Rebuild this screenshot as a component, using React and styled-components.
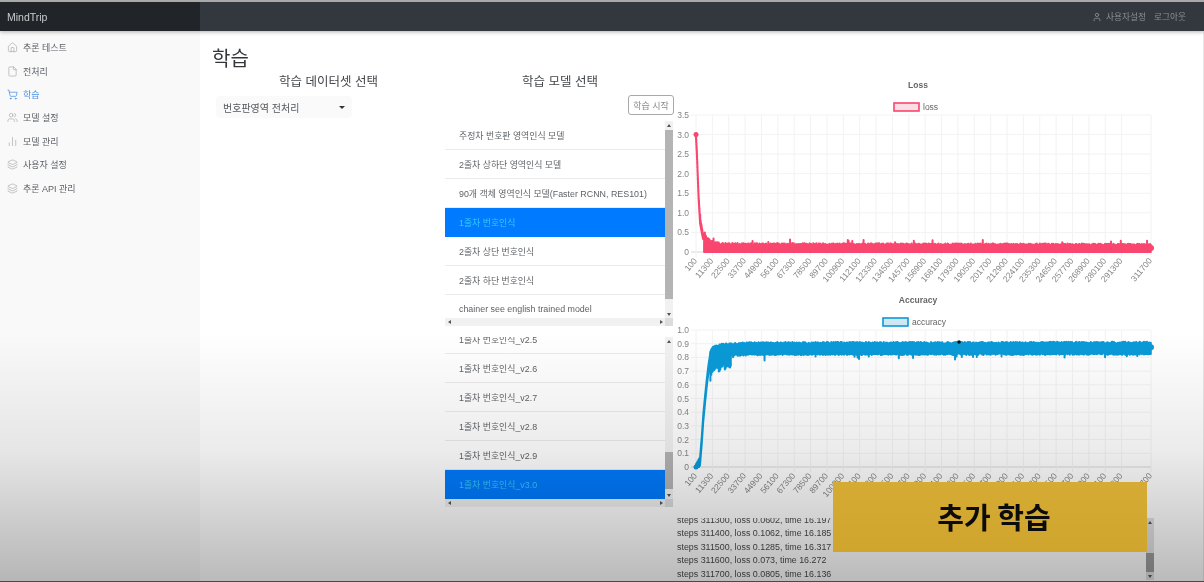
import React from 'react'
import styled, { createGlobalStyle } from 'styled-components'
import { House, File, ShoppingCart, Users, ChartNoAxesColumn, Layers, User } from 'lucide-react'

const GlobalStyle = createGlobalStyle`
  html, body {
    margin: 0;
    padding: 0;
    background: #fff;
    overflow: hidden;
  }
  * {
    box-sizing: border-box;
  }
`

const FONT = `"Liberation Sans", "Noto Sans CJK KR", sans-serif`

const Shell = styled.div`
  position: relative;
  width: 1204px;
  height: 582px;
  overflow: hidden;
  display: flex;
  flex-direction: column;
  font-family: ${FONT};
  background: #fff;
  border-top: 2px solid #a9a9a9;
  border-bottom: 1px solid #4a4a4a;
  filter: blur(0.5px);
`
const Vignette = styled.div`
  position: absolute;
  inset: 0;
  pointer-events: none;
  background: linear-gradient(
    to bottom,
    rgba(0, 0, 0, 0) 0,
    rgba(0, 0, 0, 0) 330px,
    rgba(0, 0, 0, 0.08) 450px,
    rgba(0, 0, 0, 0.27) 580px
  );
`
const TopBar = styled.header`
  flex: 0 0 29px;
  display: flex;
  align-items: center;
  background: #33383e;
  box-shadow: 0 1px 4px rgba(0, 0, 0, 0.3);
  z-index: 1;
`
const Brand = styled.div`
  width: 200px;
  height: 100%;
  display: flex;
  align-items: center;
  padding-left: 7px;
  background: #212428;
  color: #c9cbcd;
  font-size: 10.5px;
`
const TopLinks = styled.nav`
  margin-left: auto;
  display: flex;
  align-items: center;
  padding-right: 18px;
  color: #8b8f94;
  font-size: 8.7px;
`
const TopLink = styled.span`
  display: flex;
  align-items: center;
  gap: 4px;
  margin-left: 8px;
`
const Body = styled.div`
  flex: 1;
  display: flex;
  min-height: 0;
`
const Sidebar = styled.aside`
  flex: 0 0 200px;
  padding-top: 5px;
  background: #f9f9fa;
`
const NavItem = styled.div`
  height: 23.4px;
  display: flex;
  align-items: center;
  gap: 5px;
  padding-left: 7px;
  font-size: 9px;
  color: ${(props) => (props.$active ? '#4a90e2' : '#5d6165')};

  svg {
    color: ${(props) => (props.$active ? '#2f80e0' : '#a3a6a9')};
  }
`
const Main = styled.main`
  flex: 1;
  min-width: 0;
  padding-left: 12px;
  border-right: 1px solid #e8e8e8;
`
const PageTitle = styled.h1`
  margin: 0;
  height: 42px;
  padding-top: 15px;
  font-size: 20px;
  line-height: 27px;
  font-weight: 400;
  color: #33373b;
`
const Columns = styled.div`
  display: grid;
  grid-template-columns: 233px 230px 1fr;
`
const Column = styled.section`
  display: flex;
  flex-direction: column;
  min-width: 0;
`
const ColumnTitle = styled.h2`
  margin: 0;
  height: 18px;
  font-size: 12.5px;
  line-height: 18px;
  font-weight: 400;
  text-align: center;
  color: #43474b;
`
const SelectBox = styled.div`
  width: 136px;
  height: 22px;
  margin: 5px 0 0 4px;
  padding: 0 7px;
  display: flex;
  align-items: center;
  justify-content: space-between;
  border-radius: 4px;
  background: #fafafa;
  font-size: 10px;
  color: #55595d;
`
const Caret = styled.span`
  width: 0;
  height: 0;
  border-left: 3px solid transparent;
  border-right: 3px solid transparent;
  border-top: 3px solid #333;
`
const StartRow = styled.div`
  display: flex;
  justify-content: flex-end;
  padding: 4px 1px 6px 0;
`
const StartButton = styled.button`
  width: 46px;
  height: 20px;
  padding: 0;
  border: 1px solid #a8a8a8;
  border-radius: 3px;
  background: #fff;
  color: #85898d;
  font-family: ${FONT};
  font-size: 9px;
`

// drawn scrollbars: the screenshot's bars are part of the picture
const Pane = styled.div`
  display: grid;
  grid-template-columns: 1fr 8px;
  grid-template-rows: ${(props) => (props.$noBar ? '1fr' : '1fr 8px')};
  width: ${(props) => props.$width}px;
  height: ${(props) => props.$height}px;
  margin-top: ${(props) => props.$gap || 0}px;
  background: #fff;
`
const Viewport = styled.div`
  min-height: 0;
  overflow: hidden;
  display: flex;
  flex-direction: column;
  justify-content: ${(props) => (props.$bottom ? 'flex-end' : 'flex-start')};
`
const VBar = styled.div`
  display: flex;
  flex-direction: column;
  background: ${(props) => props.$track || '#f1f1f1'};
`
const HBar = styled.div`
  display: flex;
  justify-content: space-between;
  background: #f1f1f1;
`
const Corner = styled.div`
  background: #dcdcdc;
`
const Thumb = styled.div`
  flex: 0 0 ${(props) => props.$size}px;
  margin-top: ${(props) => props.$offset}px;
  background: ${(props) => props.$color || '#b4b4b4'};
`
const ArrowBox = styled.div`
  flex: 0 0 8px;
  width: 8px;
  height: 8px;
  display: flex;
  align-items: center;
  justify-content: center;
  margin-top: ${(props) => (props.$push ? 'auto' : 0)};
`
const UpTip = styled.span`
  border-left: 2.5px solid transparent;
  border-right: 2.5px solid transparent;
  border-bottom: 3px solid #555;
`
const DownTip = styled.span`
  border-left: 2.5px solid transparent;
  border-right: 2.5px solid transparent;
  border-top: 3px solid #555;
`
const LeftTip = styled.span`
  border-top: 2.5px solid transparent;
  border-bottom: 2.5px solid transparent;
  border-right: 3px solid #555;
`
const RightTip = styled.span`
  border-top: 2.5px solid transparent;
  border-bottom: 2.5px solid transparent;
  border-left: 3px solid #555;
`
const ListItem = styled.div`
  flex: 0 0 29px;
  display: flex;
  align-items: center;
  padding-left: 14px;
  white-space: nowrap;
  font-size: 8.9px;
  color: ${(props) => (props.$active ? '#35c9ff' : '#5f6367')};
  background: ${(props) => (props.$active ? '#007bff' : 'transparent')};
  border-bottom: 1px solid ${(props) => (props.$active ? '#007bff' : '#ebebeb')};
`
const ChartSvg = styled.svg`
  display: block;
`
const ChartTitle = styled.text`
  font-family: ${FONT};
  font-size: 8.5px;
  font-weight: 700;
  fill: #666;
  text-anchor: middle;
`
const LegendText = styled.text`
  font-family: ${FONT};
  font-size: 8.5px;
  fill: #666;
`
const AxisLabel = styled.text`
  font-family: ${FONT};
  font-size: 8.5px;
  fill: #858585;
  text-anchor: end;
`
const LogLines = styled.div`
  margin-top: -4px;
  padding-left: 2px;
  font-size: 8.9px;
  line-height: 13.4px;
  color: #47494b;
  white-space: nowrap;
`
const Banner = styled.div`
  position: absolute;
  left: 833px;
  top: 480px;
  width: 314px;
  height: 70px;
  padding: 0 0 2px 8px;
  display: flex;
  align-items: center;
  justify-content: center;
  background: linear-gradient(to bottom, #d6ab33, #cfa52e);
  color: #0c0c0c;
  font-family: "Noto Sans CJK KR", sans-serif;
  font-size: 29px;
  font-weight: 700;
`

const NAV = [
  { label: '추론 테스트', icon: House },
  { label: '전처리', icon: File },
  { label: '학습', icon: ShoppingCart, active: true },
  { label: '모델 설정', icon: Users },
  { label: '모델 관리', icon: ChartNoAxesColumn },
  { label: '사용자 설정', icon: Layers },
  { label: '추론 API 관리', icon: Layers },
]

const MODELS = [
  '주정차 번호판 영역인식 모델',
  '2줄차 상하단 영역인식 모델',
  '90개 객체 영역인식 모델(Faster RCNN, RES101)',
  '1줄차 번호인식',
  '2줄차 상단 번호인식',
  '2줄차 하단 번호인식',
  'chainer see english trained model',
]

const VERSIONS = ['v2.5', 'v2.6', 'v2.7', 'v2.8', 'v2.9', 'v3.0'].map((v) => `1줄차 번호인식_${v}`)

const LOGS = [
  'steps 311300, loss 0.0602, time 16.197',
  'steps 311400, loss 0.1062, time 16.185',
  'steps 311500, loss 0.1285, time 16.317',
  'steps 311600, loss 0.073, time 16.272',
  'steps 311700, loss 0.0805, time 16.136',
]

// chart geometry, same for both charts
const PLOT = { left: 21, right: 476, top: 42, bottom: 179 }
const TICK_STEP = 16.37
const STEPS = []
for (let i = 0; i <= 26; i++) STEPS.push({ x: PLOT.left + i * TICK_STEP, label: 100 + i * 11200 })
STEPS.push({ x: PLOT.right, label: 311700 })

const seeded = (seed) => {
  let s = seed
  return () => {
    s = (s * 16807) % 2147483647
    return s / 2147483647
  }
}

const lerp = (points, x) => {
  for (let i = 1; i < points.length; i++) {
    if (x <= points[i][0]) {
      const [x0, y0] = points[i - 1]
      const [x1, y1] = points[i]
      return y0 + ((y1 - y0) * (x - x0)) / (x1 - x0)
    }
  }
  return points[points.length - 1][1]
}

// loss: steep fall, then a noisy band along the floor
const lossBand = () => {
  const rnd = seeded(4711)
  const scale = (v) => PLOT.bottom - (v / 3.5) * (PLOT.bottom - PLOT.top)
  const curve = [[0, 3], [1, 2.5], [2.5, 1.5], [4, 0.85], [7, 0.45], [14, 0.27], [25, 0.19], [500, 0.17]]
  let d = ''
  for (let x = 0; x <= PLOT.right - PLOT.left; x += x < 10 ? 0.15 : 0.75) {
    const base = lerp(curve, x)
    const spike = rnd() > 0.97 ? 0.06 + rnd() * 0.08 : rnd() * 0.04
    const floor = x < 8 ? base - 0.12 : 0
    d += `M${(PLOT.left + x).toFixed(2)} ${scale(base + spike).toFixed(1)}V${scale(floor).toFixed(1)}`
  }
  return d
}

// accuracy: fast climb, then a thick band just under 0.9
const accuracyBand = () => {
  const rnd = seeded(90210)
  const scale = (v) => PLOT.bottom - v * (PLOT.bottom - PLOT.top)
  const curve = [
    [0, 0], [4, 0.05], [5.7, 0.2], [7.3, 0.37], [9, 0.5], [10.7, 0.62], [12.3, 0.72],
    [14, 0.8], [17, 0.84], [27, 0.86], [54, 0.87], [500, 0.873],
  ]
  let d = ''
  for (let x = 0; x <= PLOT.right - PLOT.left; x += x < 16 ? 0.15 : 0.75) {
    const base = lerp(curve, x)
    const early = x > 12 && x < 35 ? 0.06 * rnd() + 0.05 : 0
    const dip = rnd() > 0.97 ? 0.02 + rnd() * 0.03 : rnd() * 0.012
    const top = x < 14 ? base + 0.02 : base + 0.03 + rnd() * 0.012
    const bottom = x < 14 ? base - 0.04 : base - 0.042 - dip - early
    d += `M${(PLOT.left + x).toFixed(2)} ${scale(top).toFixed(1)}V${scale(Math.max(bottom, 0)).toFixed(1)}`
  }
  return d
}

const LOSS_PATH = lossBand()
const ACCURACY_PATH = accuracyBand()

const Chart = ({ title, legend, legendX, color, fill, path, yTicks, yMax, height, end, dot }) => {
  const h = PLOT.bottom - PLOT.top
  return (
    <ChartSvg width={500} height={height}>
      <ChartTitle x={243} y={15}>{title}</ChartTitle>
      <rect x={legendX} y={30} width={25} height={8} fill={fill} stroke={color} strokeWidth={1.6} />
      <LegendText x={legendX + 29} y={37}>{legend}</LegendText>

      {yTicks.map((v) => {
        const y = PLOT.bottom - (v / yMax) * h
        return (
          <g key={v}>
            <line x1={PLOT.left - 5} x2={PLOT.right} y1={y} y2={y} stroke={v === 0 ? '#dcd6d8' : '#f3f2f4'} />
            <AxisLabel x={PLOT.left - 7} y={y + 3}>{v === 0 ? '0' : v.toFixed(1)}</AxisLabel>
          </g>
        )
      })}
      {STEPS.map((s) => (
        <g key={s.label}>
          <line x1={s.x} x2={s.x} y1={PLOT.top} y2={PLOT.bottom + 5} stroke="#f3f2f4" />
          <AxisLabel
            x={s.x + 1.5}
            y={PLOT.bottom + 9}
            transform={`rotate(-50 ${s.x + 1.5} ${PLOT.bottom + 9})`}
          >
            {s.label}
          </AxisLabel>
        </g>
      ))}

      <path d={path} stroke={color} strokeWidth={2} strokeLinecap="round" fill="none" />
      <circle cx={PLOT.left} cy={PLOT.bottom - (end.start / yMax) * h} r={2.5} fill={color} />
      <circle cx={PLOT.right} cy={PLOT.bottom - (end.value / yMax) * h} r={3} fill={color} />
      {dot && <circle cx={dot.x} cy={dot.y} r={1.8} fill={dot.color} />}
    </ChartSvg>
  )
}

const VerticalBar = ({ offset, size, track, color }) => (
  <VBar $track={track}>
    <ArrowBox><UpTip /></ArrowBox>
    <Thumb $offset={offset} $size={size} $color={color} />
    <ArrowBox $push><DownTip /></ArrowBox>
  </VBar>
)

const ScrollList = ({ items, activeIndex, height, gap, offset, size, bottom }) => (
  <Pane $width={228} $height={height} $gap={gap}>
    <Viewport $bottom={bottom}>
      {items.map((name, i) => (
        <ListItem key={name} $active={i === activeIndex}>{name}</ListItem>
      ))}
    </Viewport>
    <VerticalBar offset={offset} size={size} />
    <HBar>
      <ArrowBox><LeftTip /></ArrowBox>
      <ArrowBox><RightTip /></ArrowBox>
    </HBar>
    <Corner />
  </Pane>
)

const App = () => {
  return (
    <Shell>
      <GlobalStyle />
      <TopBar>
        <Brand>MindTrip</Brand>
        <TopLinks>
          <TopLink><User size={10} />사용자설정</TopLink>
          <TopLink>로그아웃</TopLink>
        </TopLinks>
      </TopBar>
      <Body>
        <Sidebar>
          {NAV.map((item) => (
            <NavItem key={item.label} $active={item.active}>
              <item.icon size={11} strokeWidth={1.4} />
              {item.label}
            </NavItem>
          ))}
        </Sidebar>
        <Main>
          <PageTitle>학습</PageTitle>
          <Columns>
            <Column>
              <ColumnTitle>학습 데이터셋 선택</ColumnTitle>
              <SelectBox>
                번호판영역 전처리
                <Caret />
              </SelectBox>
            </Column>
            <Column>
              <ColumnTitle>학습 모델 선택</ColumnTitle>
              <StartRow>
                <StartButton>학습 시작</StartButton>
              </StartRow>
              <ScrollList items={MODELS} activeIndex={3} height={205} offset={1} size={169} />
              <ScrollList items={VERSIONS} activeIndex={5} height={170} gap={11} offset={107} size={37} bottom />
            </Column>
            <Column>
              <Chart
                title="Loss"
                legend="loss"
                legendX={219}
                color="#f9466f"
                fill="#fbdde4"
                path={LOSS_PATH}
                yTicks={[0, 0.5, 1, 1.5, 2, 2.5, 3, 3.5]}
                yMax={3.5}
                height={215}
                end={{ start: 3, value: 0.1 }}
              />
              <Chart
                title="Accuracy"
                legend="accuracy"
                legendX={208}
                color="#0a9ad8"
                fill="#cfe6f3"
                path={ACCURACY_PATH}
                yTicks={[0, 0.1, 0.2, 0.3, 0.4, 0.5, 0.6, 0.7, 0.8, 0.9, 1]}
                yMax={1}
                height={230}
                end={{ start: 0, value: 0.875 }}
                dot={{ x: 284, y: 54, color: '#10141a' }}
              />
              <Pane $width={479} $height={62} $noBar>
                <Viewport>
                  <LogLines>
                    {LOGS.map((line) => (
                      <div key={line}>{line}</div>
                    ))}
                  </LogLines>
                </Viewport>
                <VerticalBar offset={27} size={19} track="#e2e2e2" color="#9d9d9d" />
              </Pane>
            </Column>
          </Columns>
        </Main>
      </Body>
      <Vignette />
      <Banner>추가 학습</Banner>
    </Shell>
  )
}

export default App
